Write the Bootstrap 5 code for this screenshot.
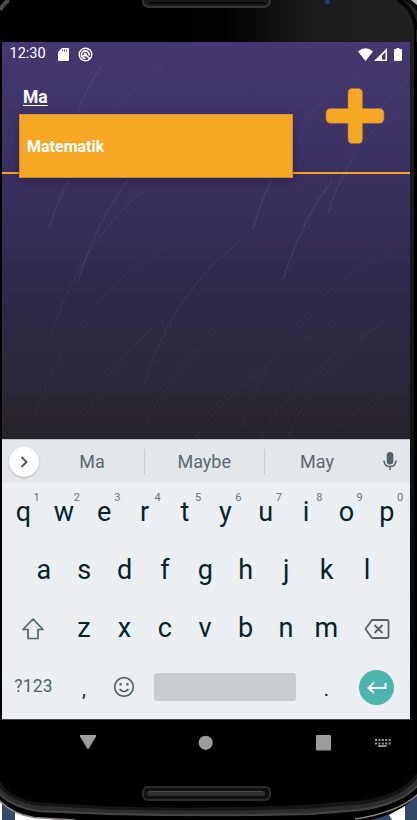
<!DOCTYPE html>
<html lang="en">
<head>
<meta charset="utf-8">
<meta name="viewport" content="width=device-width, initial-scale=1">
<title>Subjects</title>
<link href="https://cdn.jsdelivr.net/npm/bootstrap@5.3.0/dist/css/bootstrap.min.css" rel="stylesheet">
<style>
body{width:417px;height:820px;margin:0;background:#000;font-family:Roboto,sans-serif;line-height:1}
.phone{width:417px;height:820px;padding:42px 7px 53px 2px}
.shell{left:0;top:0;z-index:0}
.screen{height:725px;z-index:1}
.app{height:397px;background:linear-gradient(#45376f 0,#40366b 15%,#3a3060 33%,#362e58 45%,#312a4b 61%,#2d2943 70%,#2b283b 83%,#29242f 94%,#24242b 100%)}
.streaks{left:0;top:0}
.status{height:24px;padding:0 7px 0 7.5px;color:#fff;font-size:14.5px}
.status .clock{padding-top:1px}
.entry{height:108px}
.typed{padding:22.5px 0 0 21px;font-size:17.5px;font-weight:700;color:#fff;text-decoration:underline;text-decoration-thickness:1px;text-underline-offset:2px}
.rule{height:2px;background:#f5a524;margin-top:-2px}
.suggest{left:17px;top:72px;width:274px;height:63.5px;background:#f6a724;border:1px solid #c98b30;border-top-color:#d49639;box-shadow:0 3px 9px rgba(20,12,45,.35);color:#fff;font-weight:700;font-size:16px;padding:2px 0 0 7px;z-index:2}
.plus{margin:21px 25px 0 0}
.strip{height:44px;background:#e3e7e9;border-top:1px solid #c2c5c8;color:#5a696f;font-size:18px}
.expand{width:30px;height:30px;margin-left:7px;margin-right:1px;box-shadow:0 1px 2px rgba(0,0,0,.25)}
.word{width:119.5px;height:26px}
.word.first{width:104px}
.word.last{width:106px}
.word + .word{border-left:1px solid #c9ced1}
.keys{height:237px;background:#ebeff2;border-bottom:1px solid #42474b;color:#06232a;font-size:27px}
.keyrow{height:58.4px;padding:0 2.4px 0 1.2px}
.key{width:40.4px;height:58px}
.hint{right:4px;top:9px;font-size:11px;font-weight:400;color:#66747b}
.wide{width:60.6px}
.bar{width:161.6px}
.sym{font-size:17.5px;color:#52636a;font-weight:400;letter-spacing:.2px}
.dot{font-size:20px;padding-top:4px}
.space{width:142px;height:28px;background:#c9cdd0;border-radius:3px}
.enter{width:35px;height:35px;background:#4db6ac}
.softnav{height:47px;background:#000}
</style>
<script src="https://cdn.jsdelivr.net/npm/bootstrap@5.3.0/dist/js/bootstrap.bundle.min.js"></script>
</head>
<body class="overflow-hidden">
<div class="phone position-relative overflow-hidden">
  <svg class="shell position-absolute" width="417" height="820" viewBox="0 0 417 820" aria-hidden="true">
    <defs>
      <linearGradient id="top"><stop offset="0" stop-color="#000"/><stop offset=".55" stop-color="#020202"/><stop offset=".75" stop-color="#1c1c1c"/><stop offset="1" stop-color="#202020"/></linearGradient>
      <linearGradient id="side" x2="0" y2="1"><stop offset="0" stop-color="#1f1f1f"/><stop offset=".5" stop-color="#151515"/><stop offset="1" stop-color="#030303"/></linearGradient>
    </defs>
    <rect width="417" height="820" fill="#000"/>
    <rect width="417" height="42" fill="url(#top)"/>
    <rect x="409" y="30" width="7" height="740" fill="url(#side)"/>
    <path d="M415 24V740" stroke="#000" stroke-width="2"/>
    <path d="M0 10Q3 4 9 0" fill="none" stroke="#4a4a4a" stroke-width="4"/>
    <path d="M398 0Q414 8 416 30" fill="none" stroke="#050505" stroke-width="4"/>
    <path d="M403 0Q413 4 417 11V0z" fill="#080808"/>
    <path d="M411 0L417 5V0z" fill="#b5b5b5"/>
    <rect x="143" y="-13" width="127" height="20" rx="6" fill="#1b1b1b" stroke="#363636" stroke-width="2"/>
    <path d="M149 3H265" stroke="#090909" stroke-width="2"/>
    <circle cx="328" cy="2" r="5" fill="#171b2b"/><circle cx="327.500" cy="2" r="2.500" fill="#2c3b64"/>
    <g fill="none">
      <path d="M-2 784Q10 803 40 806L110 810Q210 813 310 808L360 804Q402 799 419 776" stroke="#151515" stroke-width="7"/>
      <path d="M-2 789Q10 804 38 808L110 812Q210 815 310 811L360 807Q402 802 419 780" stroke="#2c2c2c" stroke-width="5"/>
      <path d="M-2 793Q12 807 38 811L110 814Q210 816.500 310 814L360 810Q402 804 419 784" stroke="#464646" stroke-width="2"/>
    </g>
    <path d="M0 801Q12 813 32 817L60 820H0z" fill="#fff"/>
    <path d="M2 803Q9 810 15 812V820H2z" fill="#334a66"/>
    <path d="M417 795Q402 813 370 820H417z" fill="#324866"/>
    <path d="M389 815L405 806V820H392z" fill="#fff"/>
    <g fill="none">
      <path d="M-2 797Q11 811 36 815L110 818Q210 820 310 818L360 815Q400 809 419 789" stroke="#000" stroke-width="4.500"/>
      <path d="M-2 799Q11 814 34 817.500L75 820" stroke="#8c8886" stroke-width="1.500"/>
      <path d="M355 819Q400 812 419 793" stroke="#8c8886" stroke-width="1.500"/>
    </g>
    <rect x="143" y="787" width="127" height="13" rx="5" fill="#111" stroke="#2b2b2b" stroke-width="2"/>
    <rect x="147" y="791" width="118" height="5" rx="2.500" fill="#303030"/>
    <path d="M149 791.500H263" stroke="#4b4b4b"/>
  </svg>

  <div class="screen position-relative d-flex flex-column">
    <main class="app position-relative">
      <svg class="streaks position-absolute" width="408" height="397" viewBox="2 42 408 397" fill="none" stroke="#aab" stroke-opacity=".12" stroke-width="1.200" aria-hidden="true">
        <path d="M102 66Q84 92 77 114M69 180Q58 198 49 229M128 180Q98 219 79 279M272 180Q261 200 253 229M333 180Q305 213 283 279M353 158Q336 185 328 214"/>
        <g stroke-opacity=".08"><path d="M145 190Q82 240 50 337M238 243Q172 292 143 388"/></g>
        <g stroke-opacity=".055"><path d="M165 66Q130 88 112 114M408 80Q370 112 353 158M368 66Q320 96 290 143M408 110Q352 140 327 175M172 245Q72 297 33 422M163 320Q104 365 75 439M230 320Q172 363 139 439M405 243Q281 300 241 431M393 315Q318 364 287 439M405 318Q360 330 325 363Q285 395 259 439M265 368Q220 400 195 439M385 392Q351 412 327 439M348 320Q321 332 303 340"/></g>
      </svg>
      <div class="status position-relative d-flex align-items-center">
        <span class="clock">12:30</span>
        <svg class="ms-2" width="15" height="13" viewBox="-4 0 15 13"><path fill="#fff" d="M4 0h6q1 0 1 1v11q0 1-1 1H1q-1 0-1-1V4z"/><path stroke="#554980" d="M4.500 1.500v2M6.500 1.500v2M8.500 1.500v2"/></svg>
        <svg class="ms-2" width="16" height="15" viewBox="-1 0 16 15" fill="none" stroke="#fff"><circle cx="7.500" cy="7.500" r="6.300" stroke-width="1.400"/><path stroke-width="1.700" d="M11 8.500A3.800 3.800 0 1 0 7.500 11.400M6 6l5.600 5.600M4.800 8.600h3V6"/></svg>
        <svg class="ms-auto" width="15" height="13" viewBox="0 0 15 13"><path fill="#fff" d="M0 3.500Q7.500-3 15 3.500L7.500 13z"/></svg>
        <svg width="14" height="13" viewBox="-1 0 14 13"><path fill="#fff" d="M13 0v13H0zM11.500 4L8 7.500v4h3.500z" fill-rule="evenodd"/></svg>
        <svg class="me-0" width="16" height="13" viewBox="-7 0 16 13"><path fill="#fff" d="M2.500 0h3v1H7q1 0 1 1v10q0 1-1 1H1q-1 0-1-1V2q0-1 1-1h1.500z"/></svg>
      </div>
      <div class="entry position-relative d-flex justify-content-between align-items-start">
        <div class="typed">Ma</div>
        <svg class="plus" width="60" height="58" viewBox="325 87 60 58"><path fill="#f6a724" stroke="#a87738" stroke-width=".6" d="M352 88.500h6q4.500 0 4.500 4.500v15.500H379q5 0 5 5v4.800q0 5-5 5H362.500V139q0 4.500-4.500 4.500h-5.500q-4.500 0-4.500-4.500V123.300H331q-5 0-5-5v-4.800q0-5 5-5H348V93q0-4.500 4-4.500z"/></svg>
      </div>
      <div class="suggest position-absolute d-flex align-items-center">Matematik</div>
      <div class="rule"></div>
    </main>

    <div class="strip d-flex align-items-center">
      <div class="expand bg-white rounded-circle d-flex align-items-center justify-content-center"><svg width="10" height="12" viewBox="0 0 10 12" fill="none" stroke="#555" stroke-width="2"><path d="M2.500 1l5 5-5 5"/></svg></div>
      <div class="word first d-flex align-items-center justify-content-center">Ma</div>
      <div class="word d-flex align-items-center justify-content-center">Maybe</div>
      <div class="word last d-flex align-items-center justify-content-center">May</div>
      <svg class="ms-auto" width="27" height="19" viewBox="0 0 27 19" fill="none" stroke="#52636a" stroke-width="1.600"><rect x="4.500" y=".8" width="5" height="11" rx="2.500" fill="#52636a"/><path d="M1 8.500Q1.300 14.500 7 14.500T13 8.500M7 14.500V18"/></svg>
    </div>

    <div class="keys">
      <div class="keyrow d-flex">
        <div class="key position-relative d-flex align-items-center justify-content-center">q<span class="hint position-absolute">1</span></div>
        <div class="key position-relative d-flex align-items-center justify-content-center">w<span class="hint position-absolute">2</span></div>
        <div class="key position-relative d-flex align-items-center justify-content-center">e<span class="hint position-absolute">3</span></div>
        <div class="key position-relative d-flex align-items-center justify-content-center">r<span class="hint position-absolute">4</span></div>
        <div class="key position-relative d-flex align-items-center justify-content-center">t<span class="hint position-absolute">5</span></div>
        <div class="key position-relative d-flex align-items-center justify-content-center">y<span class="hint position-absolute">6</span></div>
        <div class="key position-relative d-flex align-items-center justify-content-center">u<span class="hint position-absolute">7</span></div>
        <div class="key position-relative d-flex align-items-center justify-content-center">i<span class="hint position-absolute">8</span></div>
        <div class="key position-relative d-flex align-items-center justify-content-center">o<span class="hint position-absolute">9</span></div>
        <div class="key position-relative d-flex align-items-center justify-content-center">p<span class="hint position-absolute">0</span></div>
      </div>
      <div class="keyrow d-flex justify-content-center">
        <div class="key d-flex align-items-center justify-content-center">a</div>
        <div class="key d-flex align-items-center justify-content-center">s</div>
        <div class="key d-flex align-items-center justify-content-center">d</div>
        <div class="key d-flex align-items-center justify-content-center">f</div>
        <div class="key d-flex align-items-center justify-content-center">g</div>
        <div class="key d-flex align-items-center justify-content-center">h</div>
        <div class="key d-flex align-items-center justify-content-center">j</div>
        <div class="key d-flex align-items-center justify-content-center">k</div>
        <div class="key d-flex align-items-center justify-content-center">l</div>
      </div>
      <div class="keyrow d-flex">
        <div class="key wide d-flex align-items-center justify-content-center"><svg width="24" height="24" viewBox="0 0 24 24" fill="none" stroke="#52636a" stroke-width="1.700" stroke-linejoin="round"><path d="M12 2L2 12.500h5V21.500h10v-9h5z"/></svg></div>
        <div class="key d-flex align-items-center justify-content-center">z</div>
        <div class="key d-flex align-items-center justify-content-center">x</div>
        <div class="key d-flex align-items-center justify-content-center">c</div>
        <div class="key d-flex align-items-center justify-content-center">v</div>
        <div class="key d-flex align-items-center justify-content-center">b</div>
        <div class="key d-flex align-items-center justify-content-center">n</div>
        <div class="key d-flex align-items-center justify-content-center">m</div>
        <div class="key wide d-flex align-items-center justify-content-center"><svg width="26" height="22" viewBox="0 0 26 22" fill="none" stroke="#52636a" stroke-width="1.800" stroke-linejoin="round"><path d="M8 2h15q1.500 0 1.500 1.500v15q0 1.500-1.500 1.500H8L1.500 11zM10.500 7l8 8M18.500 7l-8 8"/></svg></div>
      </div>
      <div class="keyrow d-flex">
        <div class="key wide sym d-flex align-items-center justify-content-center">?123</div>
        <div class="key dot d-flex align-items-center justify-content-center">,</div>
        <div class="key d-flex align-items-center justify-content-center"><svg width="22" height="22" viewBox="0 0 22 22" fill="none" stroke="#52636a" stroke-width="1.700"><circle cx="11" cy="11" r="9.300"/><path d="M6.500 13.200Q11 17.800 15.500 13.200"/><path d="M7.600 7v2.600M14.400 7v2.600" stroke-width="2.200"/></svg></div>
        <div class="key bar d-flex align-items-center justify-content-center"><div class="space"></div></div>
        <div class="key dot d-flex align-items-center justify-content-center">.</div>
        <div class="key wide d-flex align-items-center justify-content-center"><div class="enter rounded-circle d-flex align-items-center justify-content-center"><svg width="20" height="14" viewBox="0 0 20 14" fill="none" stroke="#fff" stroke-width="1.900"><path d="M18.500 3v5H2M7 2.500L1.500 8 7 13"/></svg></div></div>
      </div>
    </div>

    <nav class="softnav" aria-label="System">
      <svg width="408" height="47" viewBox="2 720 408 47" fill="#9c9c9c"><path d="M80 735h16v1.500L88.500 749h-1L80 736.500z"/><circle cx="205.700" cy="742.800" r="7.100"/><rect x="316" y="735" width="15" height="15.500" rx="1"/><path d="M375 740h15.500M375 743.500h15.500" stroke="#9c9c9c" stroke-width="2" stroke-dasharray="2 1.400"/><rect x="378" y="745.200" width="8.500" height="1.800"/></svg>
    </nav>
  </div>
</div>
</body>
</html>
